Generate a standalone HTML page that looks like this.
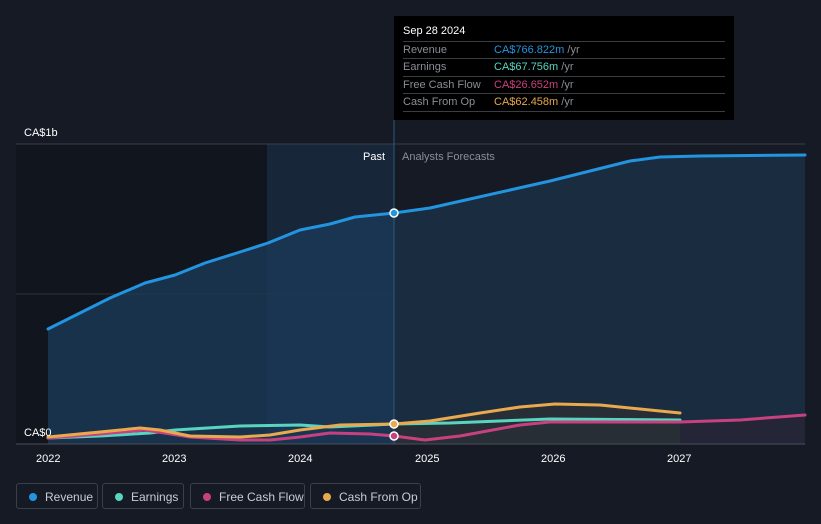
<!DOCTYPE html>
<html><head><style>
body{margin:0;background:#151a25;font-family:"Liberation Sans",sans-serif;}
.wrap{position:relative;width:821px;height:524px;overflow:hidden;background:#151a25}
.tip{position:absolute;left:394px;top:16px;width:340px;height:104px;background:#000;color:#fff;font-size:11px}
.tip .h{position:absolute;left:9px;top:9px;font-size:11px}
.row{position:absolute;left:9px;width:322px;border-top:1px solid #3a3d44;height:17px;line-height:17px;color:#8a8e96}
.row span{position:absolute;left:91px}
.row i{font-style:normal;color:#8a8e96}
.leg{position:absolute;top:483px;height:26px;border:1px solid #3a3f4a;border-radius:3px;color:#c9ccd2;font-size:12px;line-height:26px;box-sizing:border-box}
.leg b{display:inline-block;width:8px;height:8px;border-radius:50%;margin:0 8px 0 12px;vertical-align:0}
</style></head><body><div class="wrap">
<svg width="821" height="524" style="position:absolute;left:0;top:0">
<rect x="16" y="144" width="251" height="300" fill="#11151d"/>
<rect x="267" y="144" width="127" height="300" fill="#172739"/>
<line x1="16" y1="144" x2="805" y2="144" stroke="#3a3f48"/>
<line x1="16" y1="294" x2="805" y2="294" stroke="#2c313b"/>
<path d="M48,329 L80,313 110,298 145,283 175,275 205,263 240,252 268,243 300,230 330,224 355,217 394,213 L394,444 L48,444Z" fill="#1b3a57" opacity="0.8"/>
<path d="M394,213 L430,208 470,199 510,190 550,181 590,171 630,161 660,157 700,156 805,155 L805,444 L394,444Z" fill="#1a2d40"/>
<path d="M394,424 L430,421 480,413 520,407 555,404 600,405 680,413 L680,444 394,444Z" fill="#2a2e32" opacity="0.8"/>
<path d="M680,422 L740,420 805,415 L805,444 680,444Z" fill="#2a2333" opacity="0.7"/>
<line x1="394" y1="120" x2="394" y2="444" stroke="#2b5a80"/>
<line x1="16" y1="444" x2="805" y2="444" stroke="#4a4f58"/>
<g fill="none" stroke-width="3" stroke-linejoin="round" stroke-linecap="round">
<path stroke="#2394df" d="M48,329 L80,313 110,298 145,283 175,275 205,263 240,252 268,243 300,230 330,224 355,217 394,213 430,208 470,199 510,190 550,181 590,171 630,161 660,157 700,156 805,155"/>
<path stroke="#58d4c0" d="M48,438 L100,436 150,433 175,430 240,426 300,425 330,427 394,424 450,423 550,419 680,420"/>
<path stroke="#c8417f" d="M48,438 L100,434 145,430 190,437 240,440 270,440 300,437 330,433 370,434 394,436 425,440 460,436 520,425 550,422 680,422 740,420 805,415"/>
<path stroke="#e8a94f" d="M48,437 L100,432 140,428 160,430 190,436 240,437 270,435 300,430 340,425 394,424 430,421 480,413 520,407 555,404 600,405 680,413"/>
</g>
<circle cx="394" cy="213" r="4" fill="#2394df" stroke="#fff" stroke-width="1.5"/>
<circle cx="394" cy="424" r="4" fill="#e8a94f" stroke="#fff" stroke-width="1.5"/>
<circle cx="394" cy="436" r="4" fill="#c8417f" stroke="#fff" stroke-width="1.5"/>
<g font-size="11" fill="#fff">
<text x="24" y="136">CA$1b</text>
<text x="24" y="436">CA$0</text>
<text x="363" y="160">Past</text>
<text x="402" y="160" fill="#8a8e96">Analysts Forecasts</text>
<text x="36" y="462">2022</text><text x="162" y="462">2023</text><text x="288" y="462">2024</text>
<text x="415" y="462">2025</text><text x="541" y="462">2026</text><text x="667" y="462">2027</text>
</g>
</svg>
<div class="tip"><div class="h">Sep 28 2024</div>
<div class="row" style="top:25px">Revenue<span style="color:#2394df">CA$766.822m <i>/yr</i></span></div>
<div class="row" style="top:42px">Earnings<span style="color:#58d4c0">CA$67.756m <i>/yr</i></span></div>
<div class="row" style="top:60px">Free Cash Flow<span style="color:#c8417f">CA$26.652m <i>/yr</i></span></div>
<div class="row" style="top:77px">Cash From Op<span style="color:#e8a94f">CA$62.458m <i>/yr</i></span></div>
<div class="row" style="top:95px;height:0"></div>
</div>
<div class="leg" style="left:16px;width:82px"><b style="background:#2394df"></b>Revenue</div>
<div class="leg" style="left:102px;width:82px"><b style="background:#58d4c0"></b>Earnings</div>
<div class="leg" style="left:190px;width:115px"><b style="background:#c8417f"></b>Free Cash Flow</div>
<div class="leg" style="left:310px;width:111px"><b style="background:#e8a94f"></b>Cash From Op</div>
</div></body></html>
